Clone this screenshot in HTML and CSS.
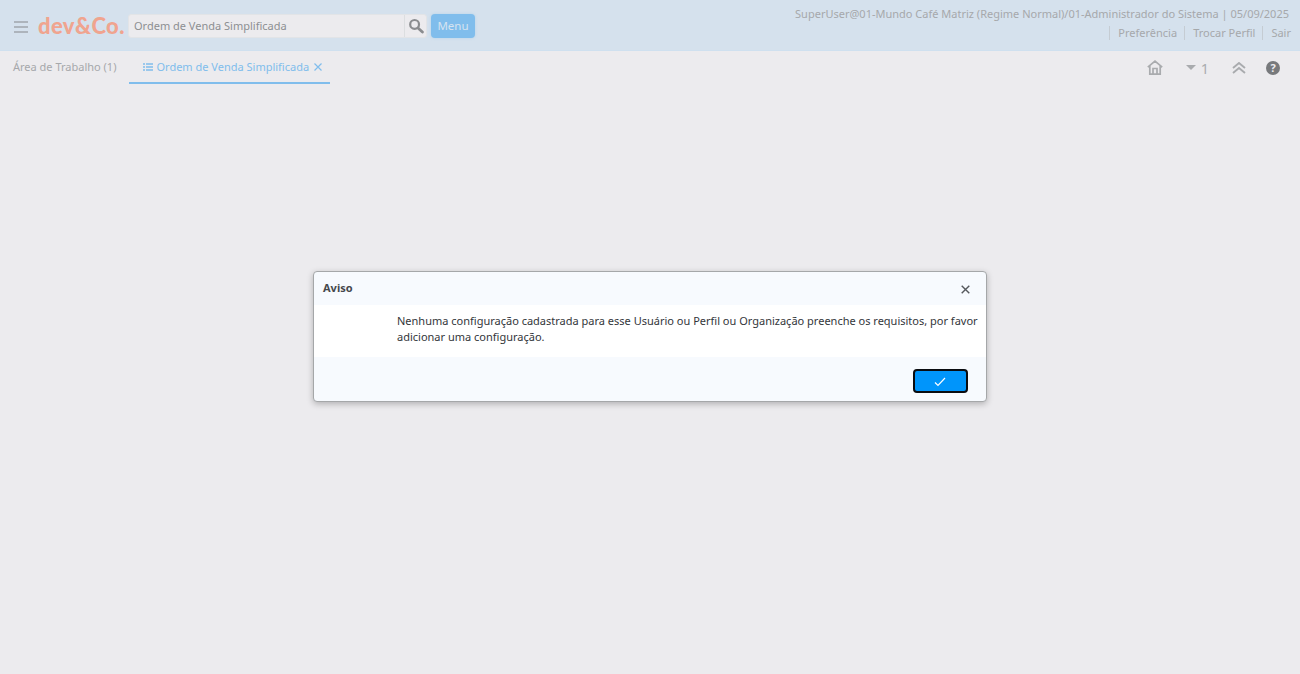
FILE: index.html
```html
<!DOCTYPE html>
<html lang="pt-BR">
<head>
<meta charset="utf-8">
<title>Ordem de Venda Simplificada</title>
<link rel="stylesheet" href="styles.css">
</head>
<body>
<header class="topbar">
  <div class="top-left">
    <svg class="burger" width="14" height="12" viewBox="0 0 14 12"><path d="M0 1h14M0 6h14M0 11h14" stroke="#a0a5ac" stroke-width="1.6" fill="none"/></svg>
    <span class="logo">dev&amp;Co.</span>
    <div class="search">
      <span class="search-input">Ordem de Venda Simplificada</span>
      <span class="search-btn">
        <svg width="16" height="16" viewBox="0 0 16 16"><circle cx="6.600" cy="6.400" r="4.400" fill="none" stroke="#8a8c8f" stroke-width="2.200"/><path d="M10 10l4.400 4" stroke="#8a8c8f" stroke-width="2.800" stroke-linecap="round"/></svg>
      </span>
    </div>
    <span class="menu-btn">Menu</span>
  </div>
  <div class="top-right">
    <div class="user-line">SuperUser@01-Mundo Café Matriz (Regime Normal)/01-Administrador do Sistema | 05/09/2025</div>
    <nav class="user-links">
      <span class="user-link">Preferência</span>
      <span class="user-link">Trocar Perfil</span>
      <span class="user-link">Sair</span>
    </nav>
  </div>
</header>
<div class="tabbar">
  <div class="tabs">
    <span class="tab">Área de Trabalho (1)</span>
    <span class="tab tab-active">
      <svg width="10" height="8" viewBox="0 0 10 8"><path d="M0 1h2M3 1h7M0 4h2M3 4h7M0 7h2M3 7h7" stroke="#80bdec" stroke-width="1.700" fill="none"/></svg>
      Ordem de Venda Simplificada
      <svg class="tab-close" width="8" height="8" viewBox="0 0 8 8"><path d="M.5.5l7 7M7.500.5l-7 7" stroke="#80bdec" stroke-width="1.200" fill="none"/></svg>
    </span>
  </div>
  <div class="tools">
    <svg class="tool-home" width="16" height="15" viewBox="0 0 16 15"><path d="M.8 7.200L8 1.200l7.200 6M2.800 6v8.200h10.400V6M6 14V8.500h4V14" fill="none" stroke="#a9abae" stroke-width="1.700"/></svg>
    <span class="tool-count"><svg width="10" height="5" viewBox="0 0 10 5"><path d="M0 0h10L5 5z" fill="#a9abae"/></svg>1</span>
    <svg class="tool-up" width="14" height="12" viewBox="0 0 14 12"><path d="M1 6l6-5 6 5M1 11l6-5 6 5" fill="none" stroke="#a9abae" stroke-width="1.900"/></svg>
    <span class="tool-help">?</span>
  </div>
</div>
<section class="dialog">
  <div class="dialog-head">
    <span class="dialog-title">Aviso</span>
    <svg class="dialog-close" width="9" height="9" viewBox="0 0 9 9"><path d="M.7.7l7.600 7.600M8.300.7L.7 8.300" stroke="#55585c" stroke-width="1.400" fill="none"/></svg>
  </div>
  <div class="dialog-body">Nenhuma configuração cadastrada para esse Usuário ou Perfil ou Organização preenche os requisitos, por favor adicionar uma configuração.</div>
  <div class="dialog-foot">
    <button class="ok-btn" type="button"><svg width="12" height="10" viewBox="0 0 12 10"><path d="M1 5.500l3 3L11 1" stroke="#fff" stroke-width="1.200" fill="none"/></svg></button>
  </div>
</section>
</body>
</html>
```
FILE: styles.css
```css
* { box-sizing: border-box; }
html, body { margin: 0; height: 100%; }
body {
  background: #ecebee;
  font-family: "Noto Sans", sans-serif;
  font-size: 11px;
  color: #a6a8ab;
  overflow: hidden;
  position: relative;
}
.topbar {
  height: 51px;
  background: #d5e1ed;
  border-bottom: 1px solid #cfe0ef;
  display: flex;
  justify-content: space-between;
  padding: 0 11px 0 14px;
}
.top-left { display: flex; align-items: flex-start; padding-top: 14px; }
.burger { margin-top: 7px; }
.logo {
  font-family: "Lato", sans-serif;
  font-weight: 900;
  font-size: 22px;
  line-height: 24px;
  letter-spacing: .4px;
  color: #f0a48f;
  margin-left: 10px;
  width: 91px;
  flex: none;
  white-space: nowrap;
}
.search {
  display: flex;
  width: 299px;
  height: 24px;
  margin-left: -1px;
  background: #ecebee;
  border-radius: 3px;
  border: 1px solid #e2e4e7;
}
.search-input { flex: 1; line-height: 22px; padding-left: 5px; color: #8d8f92; }
.search-btn {
  width: 22px;
  display: flex;
  align-items: center;
  justify-content: center;
  border-left: 1px solid #dcdee0;
}
.menu-btn {
  margin-left: 4px;
  width: 44px;
  height: 24px;
  border-radius: 4px;
  background: #80bdec;
  color: #d5e3f0;
  font-size: 11.5px;
  line-height: 24px;
  text-align: center;
  box-shadow: 0 0 3px rgba(128,189,236,.4);
}
.top-right { display: flex; flex-direction: column; align-items: flex-end; padding-top: 6px; }
.user-line { line-height: 16px; }
.user-links { display: flex; margin: 4px -2px 0 0; }
.user-link {
  line-height: 14px;
  border-left: 1px solid #c5ccd3;
  padding: 0 0 0 8px;
  margin-left: 7px;
}
.tabbar { display: flex; justify-content: space-between; height: 33px; }
.tabs { display: flex; padding-left: 13px; }
.tab { line-height: 31px; height: 33px; }
.tab-active {
  margin-left: 13px;
  width: 201px;
  padding-left: 14px;
  color: #80bdec;
  border-bottom: 2px solid #80bdec;
  display: flex;
  align-items: center;
  gap: 3px;
  white-space: nowrap;
}
.tab-close { margin-left: 2px; }
.tools { display: flex; align-items: center; padding-right: 20px; height: 33px; }
.tool-count { display: flex; align-items: center; gap: 5px; font-size: 14.5px; margin-left: 23px; color: #a9abae; }
.tool-up { margin-left: 23px; }
.tool-help {
  margin-left: 20px;
  width: 14px;
  height: 14px;
  border-radius: 50%;
  background: #77797c;
  color: #ecebee;
  font-size: 11px;
  font-weight: 700;
  line-height: 14px;
  text-align: center;
}
.dialog {
  position: absolute;
  left: 313px;
  top: 271px;
  width: 674px;
  height: 131px;
  background: #f7fafe;
  border: 1px solid #a5a7a9;
  border-radius: 4px;
  box-shadow: 0 2px 6px rgba(0,0,0,.25);
  color: #33363a;
}
.dialog-head {
  height: 33px;
  display: flex;
  align-items: center;
  justify-content: space-between;
  padding: 0 16px 2px 9px;
}
.dialog-close { margin-top: 3px; }
.dialog-title { font-weight: 700; color: #45484c; }
.dialog-body {
  background: #fff;
  height: 52px;
  padding: 8px 6px 0 83px;
  line-height: 16px;
}
.dialog-foot { display: flex; justify-content: flex-end; padding: 12px 18px 0 0; }
.ok-btn {
  width: 55px;
  height: 24px;
  background: #0095fb;
  border: 2px solid #0a0c10;
  border-radius: 4px;
  padding: 2px 2px 0 0;
  display: flex;
  align-items: center;
  justify-content: center;
}
```
